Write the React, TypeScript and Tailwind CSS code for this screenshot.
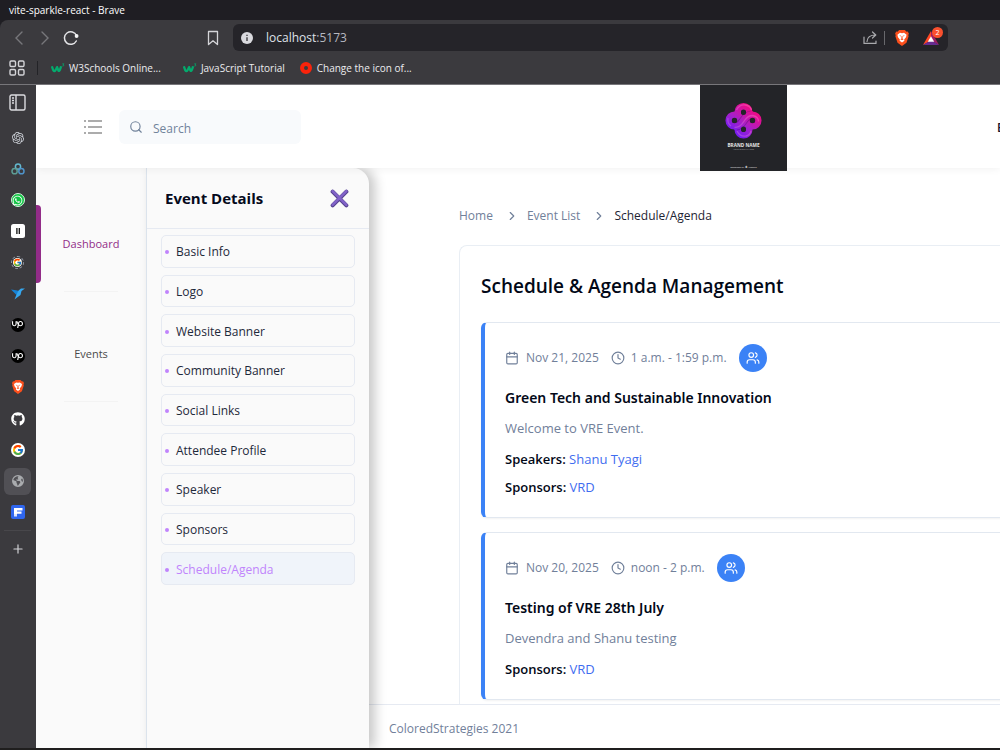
import type { ReactNode } from "react";
import { Calendar, ChevronRight, Clock, Plus, Search, Users } from "lucide-react";
import { FaEarthAmericas, FaGithub, FaUpwork, FaWhatsapp } from "react-icons/fa6";
import { FcGoogle } from "react-icons/fc";
import { SiOpenai } from "react-icons/si";
import clsx from "clsx";

type ScheduleItem = {
  date: string;
  time: string;
  title: string;
  description: string;
  speakers?: string;
  sponsors: string;
};

const schedule: ScheduleItem[] = [
  {
    date: "Nov 21, 2025",
    time: "1 a.m. - 1:59 p.m.",
    title: "Green Tech and Sustainable Innovation",
    description: "Welcome to VRE Event.",
    speakers: "Shanu Tyagi",
    sponsors: "VRD",
  },
  {
    date: "Nov 20, 2025",
    time: "noon - 2 p.m.",
    title: "Testing of VRE 28th July",
    description: "Devendra and Shanu testing",
    sponsors: "VRD",
  },
];

const eventLinks = [
  "Basic Info",
  "Logo",
  "Website Banner",
  "Community Banner",
  "Social Links",
  "Attendee Profile",
  "Speaker",
  "Sponsors",
  "Schedule/Agenda",
];

function BraveLion({ className }: { className?: string }) {
  return (
    <svg viewBox="0 0 24 28" className={className} aria-hidden="true">
      <path d="M7 0h10l3 3 2-.4L24 6l-1 3 .6 2-3.8 11.5L12 28l-7.8-5.500L.4 11 1 9 0 6l2-3.400L4 3z" fill="#fb4f1c" />
      <path
        d="M12 5.500 8.500 5 4 8.200l1 4.300 3.200 4-.4 2.500L12 22l4.200-3-.4-2.500 3.200-4 1-4.300L15.500 5z"
        fill="#fff"
      />
      <path
        d="M7 9.300l3.600.7-1 1.500zM17 9.300l-3.600.7 1 1.500zM10.800 11h2.400l-.4 4 2 1.300L12 18l-2.800-1.700 2-1.300z"
        fill="#fb4f1c"
      />
    </svg>
  );
}

function W3Icon() {
  return (
    <svg viewBox="0 0 16 12" className="h-3 w-[14px]" fill="none" aria-hidden="true">
      <path d="M1 4l1.500 4.500Q4 11 5.500 8L7 5l1.500 4Q10 10.500 11.500 4" stroke="#04aa6d" strokeWidth="2.600" strokeLinejoin="round" />
      <path d="M13 1.200h1.700l-1 1.300c1.300.1 1 1.800-.7 1.300" stroke="#04aa6d" strokeWidth=".9" />
    </svg>
  );
}

function BrandLogo() {
  return (
    <svg viewBox="0 0 87 86" className="h-[86px] w-[87px] shrink-0" role="img" aria-label="Brand name">
      <defs>
        <linearGradient id="knot" gradientUnits="userSpaceOnUse" x1="34" y1="50" x2="54" y2="24">
          <stop offset="0" stopColor="#6f1cf5" />
          <stop offset=".45" stopColor="#a81fc8" />
          <stop offset="1" stopColor="#f5087f" />
        </linearGradient>
        <linearGradient id="strand" gradientUnits="userSpaceOnUse" x1="30" y1="46" x2="56" y2="24">
          <stop offset="0" stopColor="#a050f0" />
          <stop offset="1" stopColor="#ff4aa5" />
        </linearGradient>
      </defs>
      <rect width="87" height="86" fill="#232428" />
      <g fill="none" stroke="url(#knot)" strokeWidth="6.500">
        <circle cx="43.500" cy="27" r="5.800" />
        <circle cx="43.500" cy="44.500" r="5.800" />
        <circle cx="34.500" cy="35.500" r="5.800" />
        <circle cx="52.500" cy="35.500" r="5.800" />
      </g>
      <path d="M36 41.500q4-1 7.500-6T51 30" fill="none" stroke="#40126a" strokeWidth="8.500" opacity=".45" />
      <path d="M34.500 41.500c6 0 7-3 9-6s4-6 9-6" fill="none" stroke="url(#knot)" strokeWidth="7" />
      <g fill="none" stroke="url(#strand)" strokeWidth="1.300" opacity=".75">
        <path d="M36.500 25q3-6 9-5 5 1 6 5M34.500 42.500c6 0 8-4 10-7s4-5 8-5q6 1 6 6" />
        <path d="M28 33q-1 5 3 8M37 46q3 6 9 5 4-1 5-5" />
      </g>
      <g fill="#232428">
        <circle cx="43.500" cy="27.500" r="2.500" />
        <circle cx="34.500" cy="35.500" r="2.700" />
        <circle cx="52.500" cy="35.500" r="2.700" />
        <circle cx="43.500" cy="44" r="2.500" />
      </g>
      <g fill="#e5e5e5" textAnchor="middle" fontFamily="Open Sans, sans-serif">
        <text x="43.500" y="61.500" fontSize="4.700" fontWeight="700">BRAND NAME</text>
        <text x="43.500" y="65" fontSize="2.200" opacity=".6">YOUR SLOGAN HERE</text>
        <text x="43.500" y="83" fontSize="2.500">designed by ✱ freepik</text>
      </g>
    </svg>
  );
}

function ElevenIcon() {
  return (
    <svg viewBox="0 0 14 14" className="size-[14px]" aria-hidden="true">
      <rect width="14" height="14" rx="2.500" fill="#fff" />
      <path d="M5.900 4v6M8.300 4v6" stroke="#111" strokeWidth="1.300" />
    </svg>
  );
}

function TripleRing() {
  return (
    <svg viewBox="0 0 14 12" className="h-3 w-[14px]" fill="none" strokeWidth="1.500" aria-hidden="true">
      <circle cx="7" cy="3.600" r="2.600" stroke="#63b9cf" />
      <circle cx="3.600" cy="8.200" r="2.600" stroke="#5d9c94" />
      <circle cx="10.400" cy="8.200" r="2.600" stroke="#4f93c9" />
    </svg>
  );
}

function BirdIcon() {
  return (
    <svg viewBox="0 0 14 13" className="h-[13px] w-[14px]" aria-hidden="true">
      <path d="M0 2.500 6.500 3.500 8 5 5.500 8z" fill="#1583d8" />
      <path d="M14 1.500 10.500 4 9.500 8 3.500 12.500 5.500 7.500 7.500 3.500 10 1.500z" fill="#35a7f0" />
    </svg>
  );
}

function FIcon() {
  return (
    <svg viewBox="0 0 14 14" className="size-[14px]" aria-hidden="true">
      <rect width="14" height="14" rx="2" fill="#2f66ee" />
      <path d="M3 3h8.500v2.500H6v1h4.500v2.300H6V9H3z" fill="#fff" />
      <path d="M3 9h3v2.500H3z" fill="#dbe5ff" />
    </svg>
  );
}

function UpIcon() {
  return (
    <span className="flex size-[14px] items-center justify-center rounded-full bg-black text-white">
      <FaUpwork className="size-[11px]" aria-hidden="true" />
    </span>
  );
}

const pinnedTabs: { label: string; icon: ReactNode; active?: boolean }[] = [
  { label: "ChatGPT", icon: <SiOpenai className="size-3 text-gray-300" /> },
  { label: "Rings", icon: <TripleRing /> },
  {
    label: "WhatsApp",
    icon: (
      <span className="flex size-[14px] items-center justify-center rounded-full border border-[#d5f5dd] bg-[#12c344] text-white">
        <FaWhatsapp className="size-[11px]" />
      </span>
    ),
  },
  { label: "ElevenLabs", icon: <ElevenIcon /> },
  {
    label: "Google profile",
    icon: (
      <span className="flex size-[13px] items-center justify-center rounded-full border border-dashed border-gray-400">
        <span className="rounded-full bg-white">
          <FcGoogle className="size-[9px]" />
        </span>
      </span>
    ),
  },
  { label: "Bird", icon: <BirdIcon /> },
  { label: "Upwork", icon: <UpIcon /> },
  { label: "Upwork messages", icon: <UpIcon /> },
  { label: "Brave", icon: <BraveLion className="h-[14px] w-3" /> },
  { label: "GitHub", icon: <FaGithub className="size-[14px] text-white" /> },
  {
    label: "Google",
    icon: (
      <span className="flex size-[14px] items-center justify-center rounded-full bg-white">
        <FcGoogle className="size-3" />
      </span>
    ),
  },
  { label: "localhost", icon: <FaEarthAmericas className="size-3 text-[#a9abae]" />, active: true },
  { label: "Forms", icon: <FIcon /> },
];

function BrowserBar() {
  return (
    <div className="shrink-0 bg-[#1f1e23] text-white">
      <div className="flex h-5 items-center px-[9px] text-[10px]">vite-sparkle-react - Brave</div>
      <div className="rounded-tl-lg border-b border-[#77767a] bg-[#3b3a3e]">
        <div className="flex items-center pt-1 pr-[52px] pl-[14px]">
          <button aria-label="Back">
            <svg viewBox="0 0 10 14" className="h-[14px] w-[10px]" fill="none" stroke="#77777b" strokeWidth="1.400" aria-hidden="true">
              <path d="M8 1 2 7l6 6" strokeLinecap="round" />
            </svg>
          </button>
          <button aria-label="Forward" className="ml-4">
            <svg viewBox="0 0 10 14" className="h-[14px] w-[10px]" fill="none" stroke="#77777b" strokeWidth="1.400" aria-hidden="true">
              <path d="M2 1l6 6-6 6" strokeLinecap="round" />
            </svg>
          </button>
          <button aria-label="Reload" className="ml-[13px]">
            <svg viewBox="0 0 16 16" className="size-4" fill="none" aria-hidden="true">
              <path d="M13.500 5.500A6.300 6.300 0 1 0 13.300 11" stroke="#e4e4e7" strokeWidth="1.500" strokeLinecap="round" />
              <circle cx="13.600" cy="6" r="1.900" fill="#f4f4f5" />
            </svg>
          </button>
          <button aria-label="Bookmark this tab" className="ml-32">
            <svg viewBox="0 0 12 16" className="h-4 w-3" fill="none" aria-hidden="true">
              <path d="M1.500 1.500h9v13L6 10.800 1.500 14.500z" stroke="#d4d4d8" strokeWidth="1.300" strokeLinejoin="round" />
            </svg>
          </button>
          <div className="ml-[14px] flex h-[27px] flex-1 items-center rounded-md bg-[#252429] pr-[9px] pl-2">
            <svg viewBox="0 0 12 12" className="size-3" aria-hidden="true">
              <circle cx="6" cy="6" r="6" fill="#d9d9de" />
              <path d="M6 5.300v3.700M6 2.800v1.300" stroke="#252429" strokeWidth="1.200" />
            </svg>
            <span className="ml-[13px] flex-1 text-xs text-[#dfe1e8]">
              localhost<span className="text-[#b6b8c0]">:5173</span>
            </span>
            <button aria-label="Share this page">
              <svg viewBox="0 0 14 14" className="size-[14px]" fill="none" stroke="#a9a9ad" strokeWidth="1.200" aria-hidden="true">
                <path d="M1 6v6.400h12V10M4 10.500c.3-4 3-6.500 8.500-6.500M9.500 1l3.300 3-3.300 3" strokeLinecap="round" strokeLinejoin="round" />
              </svg>
            </button>
            <span className="ml-[7px] h-[14px] w-px bg-[#68686c]" />
            <button aria-label="Brave Shields" className="ml-[10px]">
              <BraveLion className="h-4 w-[14px]" />
            </button>
            <button aria-label="Brave Rewards" className="relative ml-[14px]">
              <svg viewBox="0 0 16 14" className="h-[14px] w-4" aria-hidden="true">
                <path d="M8 0 0 14l8-4.500z" fill="#ff4724" />
                <path d="M8 0l8 14-8-4.500z" fill="#9e1f63" />
                <path d="M0 14h16L8 9z" fill="#662d91" />
                <path d="M8 5.200 4.800 10.800h6.400z" fill="#fff" />
              </svg>
              <span className="absolute -top-1 left-[9px] flex size-[11px] items-center justify-center rounded-full bg-[#f9502e] text-[7px] leading-none">
                2
              </span>
            </button>
          </div>
        </div>
        <nav aria-label="Bookmarks" className="flex h-[33px] items-center pt-px pl-[9px] text-[10px] text-[#ececee]">
          <button aria-label="All bookmarks">
            <svg viewBox="0 0 16 16" className="size-4" fill="none" stroke="#d4d4d8" strokeWidth="1.400" aria-hidden="true">
              <rect x="1" y="1" width="5.500" height="5.500" rx="1.200" />
              <rect x="9.500" y="1" width="5.500" height="5.500" rx="1.200" />
              <rect x="1" y="9.500" width="5.500" height="5.500" rx="1.200" />
              <rect x="9.500" y="9.500" width="5.500" height="5.500" rx="1.200" />
            </svg>
          </button>
          <span className="ml-3 h-[14px] w-px bg-[#232327]" />
          <a href="#w3schools" className="ml-[13px] flex items-center gap-1 whitespace-nowrap">
            <W3Icon />
            W3Schools Online...
          </a>
          <a href="#javascript" className="ml-[22px] flex items-center gap-1 whitespace-nowrap">
            <W3Icon />
            JavaScript Tutorial
          </a>
          <a href="#icon" className="ml-[15px] flex items-center gap-[5px] whitespace-nowrap">
            <span className="size-3 rounded-full border-4 border-[#f9230b] bg-[#3b3a3e]" />
            Change the icon of...
          </a>
        </nav>
      </div>
    </div>
  );
}

function BrowserSidebar() {
  return (
    <aside className="flex w-9 shrink-0 flex-col bg-[#3b3a3e] pr-[5px] pl-1">
      <button aria-label="Toggle sidebar" className="mt-[9px] flex justify-center">
        <svg viewBox="0 0 17 17" className="size-[17px]" fill="none" stroke="#dcdce0" strokeWidth="1.400" aria-hidden="true">
          <rect x="1" y="1" width="15" height="15" rx="1.500" />
          <path d="M7 1v15M3 4h2M3 6.500h2M3 9h2" />
        </svg>
      </button>
      <div className="mt-[11px] grid h-[406px] shrink-0 auto-rows-fr">
        {pinnedTabs.map((tab) => (
          <button
            key={tab.label}
            aria-label={tab.label}
            className={clsx(
              "my-[2px] flex items-center justify-center rounded-md",
              tab.active && "bg-[#515055]",
            )}
          >
            {tab.icon}
          </button>
        ))}
      </div>
      <button aria-label="New tab" className="mt-[2px] flex justify-center border-t border-[#48474b] pt-[11px] text-[#d4d4d8]">
        <Plus className="size-[14px]" />
      </button>
    </aside>
  );
}

function PageHeader() {
  return (
    <header className="relative z-20 flex h-[83px] shrink-0 items-center bg-white pl-12 shadow-[0_1px_8px_rgba(0,0,0,0.06)]">
      <button aria-label="Toggle menu">
        <svg viewBox="0 0 18 14" className="h-[14px] w-[18px]" stroke="#919191" strokeWidth="1.300" aria-hidden="true">
          <path d="M0 1h2M4 1h14M0 7h2M4 7h14M0 13h2M4 13h14" />
        </svg>
      </button>
      <label className="ml-[17px] flex h-[34px] w-[182px] items-center gap-[10px] rounded-md bg-[#f8fafc] pl-[10px] text-[#71839b]">
        <Search className="size-[14px] shrink-0" aria-hidden="true" />
        <input
          type="text"
          aria-label="Search"
          placeholder="Search"
          className="h-full w-full min-w-0 bg-transparent pt-[3px] text-xs placeholder-[#71839b] outline-none"
        />
      </label>
      <div className="ml-[399px] h-[83px] shrink-0">
        <BrandLogo />
      </div>
      <span className="ml-auto w-[3px] overflow-hidden pt-[3px] text-xs font-semibold text-[#14142b]">E</span>
    </header>
  );
}

function MainNav() {
  return (
    <nav aria-label="Main" className="flex w-[110px] shrink-0 flex-col bg-[#fafafa] pt-[14px] text-center text-[11px]">
      <a href="#dashboard" className="relative flex h-[110px] flex-col text-[#922c88]">
        <span className="absolute top-[23px] left-0 h-[78px] w-[5px] rounded-r-sm bg-[#922c88]" />
        <span className="flex flex-1 items-center justify-center pt-4">Dashboard</span>
        <span className="mx-7 border-b border-[#f3f3f3]" />
      </a>
      <a href="#events" className="flex h-[110px] flex-col text-[#4a4a4a]">
        <span className="flex flex-1 items-center justify-center pt-4">Events</span>
        <span className="mx-7 border-b border-[#f3f3f3]" />
      </a>
    </nav>
  );
}

function EventPanel() {
  return (
    <section className="relative z-10 flex w-[223px] shrink-0 flex-col rounded-tr-2xl border-l border-[#dbe3ec] bg-[#fafafa] shadow-[6px_0_12px_rgba(0,0,0,0.22)]">
      <div className="flex h-[61px] items-center justify-between border-b border-[#e6eaf2] pt-px pr-5 pl-[18px]">
        <h2 className="text-[15px] font-bold text-[#050a1c]">Event Details</h2>
        <button aria-label="Close event details">
          <svg viewBox="0 0 18 18" className="size-[19px]" aria-hidden="true">
            <path d="M2.500 2.500l13 13M15.500 2.500l-13 13" stroke="#55438f" strokeWidth="3.800" strokeLinecap="round" />
            <path d="M2.500 2l13 13M15.500 2l-13 13" stroke="#8263c9" strokeWidth="2.400" strokeLinecap="round" />
          </svg>
        </button>
      </div>
      <ul className="mx-[14px] mt-[6px] grid h-[350px] auto-rows-fr gap-[7px] text-xs">
        {eventLinks.map((label) => {
          const active = label === "Schedule/Agenda";
          return (
            <li key={label} className="flex">
              <a
                href={`#${label}`}
                aria-current={active ? "page" : undefined}
                className={clsx(
                  "flex flex-1 items-center gap-[7px] rounded-[5px] border border-[#e6eaf2] pt-[2px] pl-[3px]",
                  active ? "bg-[#f0f4fa] text-[#c084fc]" : "text-[#1e293b]",
                )}
              >
                <span className="size-1 rounded-full bg-[#c084fc]" />
                {label}
              </a>
            </li>
          );
        })}
      </ul>
    </section>
  );
}

function ScheduleCard({ item }: { item: ScheduleItem }) {
  return (
    <article className="rounded-md border border-l-4 border-[#e2e8f0] border-l-[#3b82f6] px-5 pt-[21px] pb-5 text-[13px] leading-5 shadow-xs">
      <div className="flex items-center text-xs text-[#71809a]">
        <Calendar className="mr-[7px] size-[14px]" aria-hidden="true" />
        {item.date}
        <Clock className="mr-[6px] ml-3 size-[14px]" aria-hidden="true" />
        {item.time}
        <button
          aria-label="Participants"
          className="ml-3 flex size-7 items-center justify-center rounded-full bg-[#3b82f6] text-white"
        >
          <Users className="size-[14px]" />
        </button>
      </div>
      <h3 className="mt-4 font-['Noto_Sans',sans-serif] text-sm leading-5 font-semibold text-[#020817]">{item.title}</h3>
      <p className="mt-[10px] text-[#71809a]">{item.description}</p>
      {item.speakers && (
        <p className="mt-[11px]">
          <span className="font-semibold text-[#020817]">Speakers:</span>{" "}
          <a href="#speaker" className="text-[#3f6df0]">{item.speakers}</a>
        </p>
      )}
      <p className={item.speakers ? "mt-2" : "mt-[11px]"}>
        <span className="font-semibold text-[#020817]">Sponsors:</span>{" "}
        <a href="#sponsor" className="text-[#3f6df0]">{item.sponsors}</a>
      </p>
    </article>
  );
}

function SchedulePage() {
  return (
    <div className="flex min-w-0 flex-1 flex-col bg-white">
      <main className="min-h-0 flex-1 overflow-hidden pt-[38px] pl-[90px]">
        <nav aria-label="Breadcrumb" className="flex items-center gap-3 text-xs leading-5 text-[#71809a]">
          <a href="#home">Home</a>
          <ChevronRight className="size-[14px]" aria-hidden="true" />
          <a href="#events" className="-ml-1">Event List</a>
          <ChevronRight className="size-[14px]" aria-hidden="true" />
          <span className="-ml-1 text-[#1e2433]">Schedule/Agenda</span>
        </nav>
        <section className="mt-[19px] rounded-tl-lg border-t border-l border-[#e9eef4] pt-[26px] pl-[21px]">
          <h1 className="text-[19px] leading-7 font-semibold text-[#020817]">Schedule & Agenda Management</h1>
          <div className="-mr-2 mt-[22px] flex flex-col gap-[14px] pb-5">
            {schedule.map((item) => (
              <ScheduleCard key={item.title} item={item} />
            ))}
          </div>
        </section>
      </main>
      <footer className="flex h-11 shrink-0 items-center border-t border-[#e6eaf2] pt-1 pl-5 text-xs text-[#71809a]">
        ColoredStrategies 2021
      </footer>
    </div>
  );
}

export default function App() {
  return (
    <div className="flex h-screen flex-col overflow-hidden bg-white font-['Open_Sans',sans-serif]">
      <BrowserBar />
      <div className="flex min-h-0 flex-1">
        <BrowserSidebar />
        <div className="flex min-w-0 flex-1 flex-col overflow-hidden">
          <PageHeader />
          <div className="flex min-h-0 flex-1">
            <MainNav />
            <EventPanel />
            <SchedulePage />
          </div>
        </div>
      </div>
      <div className="relative z-30 h-[2px] shrink-0 bg-[#1f1e1e]" />
    </div>
  );
}
